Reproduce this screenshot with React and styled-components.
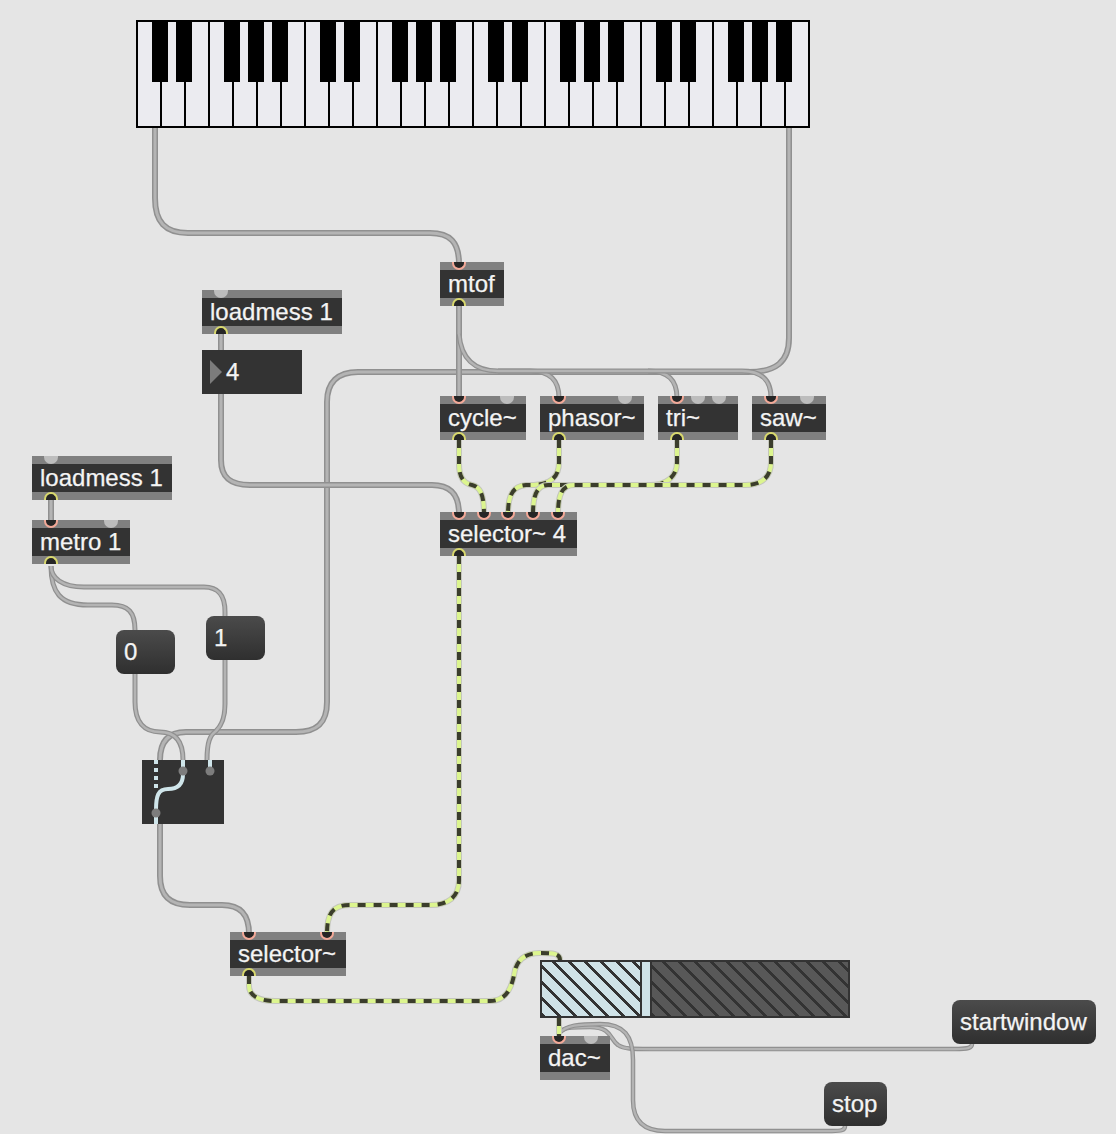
import React from 'react';
import styled, { createGlobalStyle } from 'styled-components';

const GlobalStyle = createGlobalStyle`
  html, body {
    margin: 0;
    padding: 0;
    background: #e5e5e5;
  }
`;

const Patcher = styled.div`
  position: relative;
  width: 1116px;
  height: 1134px;
  overflow: hidden;
  background: #e5e5e5;
  font-family: "Liberation Sans", Arial, sans-serif;
  font-size: 24px;
  color: #f4f4f4;
  -webkit-text-stroke: 0.25px #f4f4f4;
`;

const CordLayer = styled.svg`
  position: absolute;
  left: 0;
  top: 0;
`;

const Keyboard = styled.div`
  position: absolute;
  left: 136px;
  top: 20px;
  display: flex;
  gap: 2px;
  height: 104px;
  border: 2px solid #000;
  background: #000;
`;

const WhiteKey = styled.div`
  width: 22px;
  background: #ebebf0;
`;

const BlackKey = styled.div`
  position: absolute;
  top: 0;
  left: ${(p) => p.$x}px;
  width: 16px;
  height: 60px;
  background: #000;
`;

const ObjectBox = styled.div`
  position: absolute;
  left: ${(p) => p.$x}px;
  top: ${(p) => p.$y}px;
  width: ${(p) => p.$w}px;
  height: 44px;
  box-sizing: border-box;
  padding: 0 8px;
  border-top: 8px solid #808080;
  border-bottom: 8px solid #808080;
  background: #333;
  line-height: 28px;
  white-space: nowrap;
`;

const Port = styled.span`
  position: absolute;
  left: ${(p) => p.$x - 7}px;
  width: 14px;
  height: 8px;
  box-sizing: border-box;
`;

const Inlet = styled(Port)`
  top: -8px;
  border: 2px solid #f3a998;
  border-top: 0;
  border-radius: 0 0 7px 7px;
  background: #262626;
`;

const Outlet = styled(Port)`
  bottom: -8px;
  border: 2px solid #d9d96e;
  border-bottom: 0;
  border-radius: 7px 7px 0 0;
  background: #262626;
`;

const IdleInlet = styled(Port)`
  top: -8px;
  border-radius: 0 0 7px 7px;
  background: #bdbdbd;
`;

const NumberBox = styled.div`
  position: absolute;
  left: 202px;
  top: 350px;
  display: flex;
  align-items: center;
  gap: 4px;
  width: 100px;
  height: 44px;
  box-sizing: border-box;
  padding-left: 8px;
  background: #333;
`;

const NumberArrow = styled.span`
  width: 0;
  height: 0;
  border-left: 12px solid #7c7c7c;
  border-top: 12px solid transparent;
  border-bottom: 12px solid transparent;
`;

const MessageBox = styled.div`
  position: absolute;
  left: ${(p) => p.$x}px;
  top: ${(p) => p.$y}px;
  width: ${(p) => p.$w}px;
  height: 44px;
  box-sizing: border-box;
  padding-left: 8px;
  border-radius: 8px;
  background: linear-gradient(#4b4b4b, #2f2f2f);
  line-height: 44px;
  white-space: nowrap;
`;

const GateBox = styled.svg`
  position: absolute;
  left: 142px;
  top: 760px;
  background: #333;
`;

const Meter = styled.div`
  position: absolute;
  left: 540px;
  top: 960px;
  display: flex;
  width: 310px;
  height: 58px;
  box-sizing: border-box;
  border: 2px solid #333;
  background: #333;
`;

const MeterHatch = styled.div`
  width: ${(p) => p.$w}px;
  background: repeating-linear-gradient(
    45deg,
    #333 0 2.8px,
    ${(p) => p.$color} 2.8px 11.3px
  );
`;

const MeterPeak = styled.div`
  width: 8px;
  margin: 0 2px;
  background: #cfe2e7;
`;

const controlCords = [
  { w: 6, d: 'M155 128 V198 C155 222 165 233 188 233 H430 C450 233 459 242 459 264' },
  { w: 6, d: 'M789 128 V338 C789 362 776 372 748 372 H358 C338 372 327 382 327 402 V702 C327 724 316 732 296 732 H186 C168 732 160 742 160 760' },
  { w: 6, d: 'M459 306 V398' },
  { w: 5, d: 'M459 334 C461 358 474 371 498 371 H530 C550 371 559 380 559 398' },
  { w: 5, d: 'M498 371 H648 C668 371 677 380 677 398' },
  { w: 5, d: 'M648 371 H742 C762 371 771 380 771 398' },
  { w: 6, d: 'M221 334 V460 C221 478 231 485 250 485 H432 C450 485 459 494 459 514' },
  { w: 6, d: 'M51 500 V522' },
  { w: 5, d: 'M51 566 C51 592 60 605 88 605 H112 C128 605 135 612 135 630 V702 C135 722 144 732 160 732 C176 732 183 742 183 760' },
  { w: 5, d: 'M51 566 C51 578 62 587 84 587 H204 C219 587 225 596 225 612 V704 C225 722 219 728 216 731 C210 735 207 742 207 760' },
  { w: 6, d: 'M160 824 V876 C160 896 170 905 190 905 H222 C240 905 249 914 249 934' },
  { w: 4.5, d: 'M559 1032 C565 1027 575 1027 590 1027 C612 1027 610 1040 618 1045 C624 1049 632 1049 650 1049 H955 C968 1049 972 1048 972 1044' },
  { w: 4.5, d: 'M559 1034 C565 1025 580 1024 600 1024 C624 1024 633 1036 633 1060 V1100 C633 1122 645 1131 665 1131 H832 C842 1131 845 1130 845 1126' },
];

const signalCords = [
  'M459 440 V464 C459 480 466 484 472 485 C480 487 484 494 484 514',
  'M559 440 V462 C559 478 550 484 534 485 H526 C513 486 508 495 508 514',
  'M677 440 V462 C677 477 666 485 650 485 H548 C537 485 533 495 533 514',
  'M771 440 V462 C771 477 762 485 745 485 H574 C562 485 558 495 558 514',
  'M459 556 V880 C459 897 448 905 430 905 H350 C332 905 327 914 327 934',
  'M249 976 V986 C249 995 258 1001 275 1001 H490 C505 1001 511 990 514 975 C516 960 525 953 540 953 C552 953 560 953 560 960',
  'M559 1018 V1038',
];

const blackOffsets = [14, 38, 86, 110, 134];

const objects = [
  { label: 'mtof', x: 440, y: 262, w: 64, inlets: [19], idle: [], outlet: true },
  { label: 'loadmess 1', x: 202, y: 290, w: 140, inlets: [], idle: [19], outlet: true },
  { label: 'cycle~', x: 440, y: 396, w: 86, inlets: [19], idle: [67], outlet: true },
  { label: 'phasor~', x: 540, y: 396, w: 104, inlets: [19], idle: [85], outlet: true },
  { label: 'tri~', x: 658, y: 396, w: 80, inlets: [19], idle: [40, 61], outlet: true },
  { label: 'saw~', x: 752, y: 396, w: 74, inlets: [19], idle: [55], outlet: true },
  { label: 'selector~ 4', x: 440, y: 512, w: 137, inlets: [19, 44, 68, 93, 118], idle: [], outlet: true },
  { label: 'loadmess 1', x: 32, y: 456, w: 140, inlets: [], idle: [19], outlet: true },
  { label: 'metro 1', x: 32, y: 520, w: 98, inlets: [19], idle: [79], outlet: true },
  { label: 'selector~', x: 230, y: 932, w: 116, inlets: [19, 97], idle: [], outlet: true },
  { label: 'dac~', x: 540, y: 1036, w: 70, inlets: [19], idle: [51], outlet: false },
];

const messages = [
  { label: '0', x: 116, y: 630, w: 59 },
  { label: '1', x: 206, y: 616, w: 59 },
  { label: 'startwindow', x: 952, y: 1000, w: 144 },
  { label: 'stop', x: 824, y: 1082, w: 63 },
];

const Cords = () => (
  <CordLayer width="1116" height="1134" fill="none">
    {controlCords.map(({ d, w }, i) => (
      <g key={i}>
        <path d={d} stroke="#909090" strokeWidth={w} />
        <path d={d} stroke="#b4b4b4" strokeWidth={w / 2} />
      </g>
    ))}
    {signalCords.map((d, i) => (
      <g key={i}>
        <path d={d} stroke="#c4c6bc" strokeWidth="6" />
        <path d={d} stroke="#dcf58f" strokeWidth="4" />
        <path d={d} stroke="#3b3d2c" strokeWidth="4" strokeDasharray="8 8" />
      </g>
    ))}
  </CordLayer>
);

const Gate = () => (
  <GateBox width="82" height="64" fill="none">
    <path d="M14 0 V28" stroke="#cfe5ea" strokeWidth="4" strokeDasharray="4 4" />
    <path d="M41 0 V14 C41 24 36 29 26 29 C16 29 14 36 14 50 V64" stroke="#cfe5ea" strokeWidth="4" />
    <path d="M68 0 V8" stroke="#cfe5ea" strokeWidth="4" />
    <circle cx="41" cy="11" r="4.5" fill="#7d7d7d" />
    <circle cx="68" cy="11" r="4.5" fill="#7d7d7d" />
    <circle cx="14" cy="53" r="4.5" fill="#7d7d7d" />
  </GateBox>
);

export default function App() {
  return (
    <Patcher>
      <GlobalStyle />
      <Cords />
      <Keyboard>
        {Array.from({ length: 28 }, (_, i) => (
          <WhiteKey key={i} />
        ))}
        {[0, 1, 2, 3].flatMap((octave) =>
          blackOffsets.map((offset) => (
            <BlackKey key={`${octave}-${offset}`} $x={offset + octave * 168} />
          ))
        )}
      </Keyboard>
      {objects.map((o) => (
        <ObjectBox key={`${o.label}-${o.x}`} $x={o.x} $y={o.y} $w={o.w}>
          {o.label}
          {o.inlets.map((x) => (
            <Inlet key={x} $x={x} />
          ))}
          {o.idle.map((x) => (
            <IdleInlet key={x} $x={x} />
          ))}
          {o.outlet && <Outlet $x={19} />}
        </ObjectBox>
      ))}
      <NumberBox>
        <NumberArrow />
        4
      </NumberBox>
      {messages.map((m) => (
        <MessageBox key={m.label} $x={m.x} $y={m.y} $w={m.w}>
          {m.label}
        </MessageBox>
      ))}
      <Gate />
      <Meter>
        <MeterHatch $w={98} $color="#cfe2e7" />
        <MeterPeak />
        <MeterHatch $w={196} $color="#585858" />
      </Meter>
    </Patcher>
  );
}
